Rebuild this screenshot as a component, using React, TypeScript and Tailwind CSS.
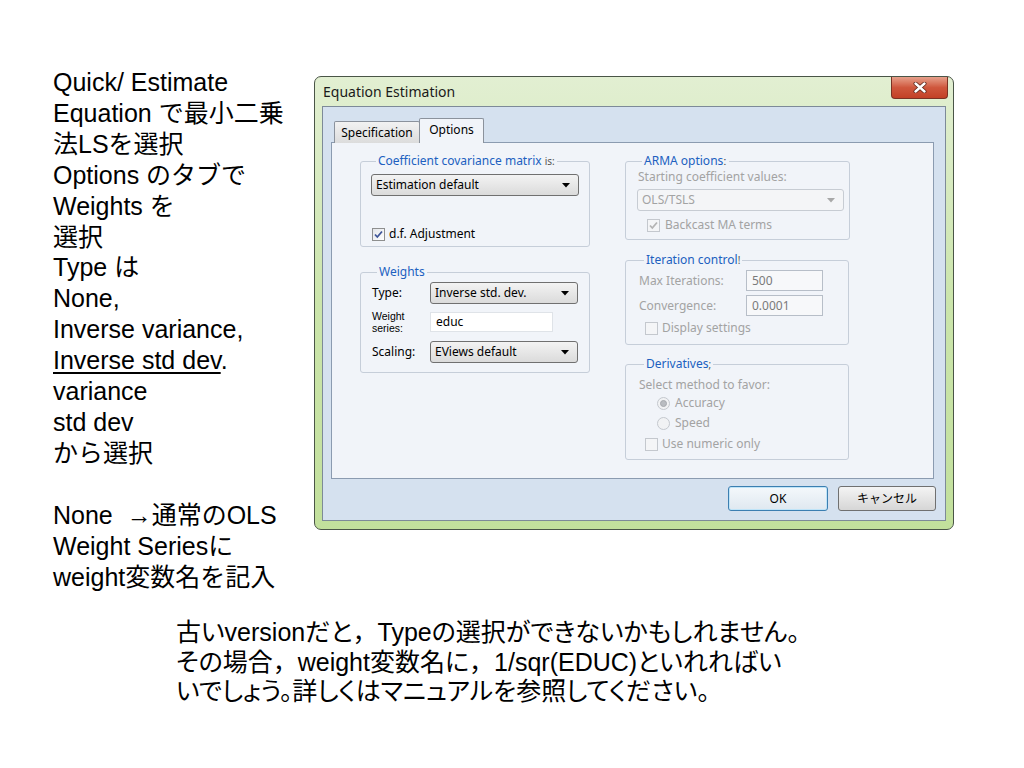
import React from "react";

const DLG = "font-['Noto_Sans','Noto_Sans_CJK_JP',sans-serif]";

function Arrow({ disabled }: { disabled?: boolean }) {
  return (
    <svg width="8" height="5" viewBox="0 0 8 5" className="shrink-0">
      <polygon points="0,0 8,0 4,4.5" fill={disabled ? "#a8a8a8" : "#000"} />
    </svg>
  );
}

function Select({ value, className = "", disabled }: { value: string; className?: string; disabled?: boolean }) {
  return (
    <div
      className={`flex items-center justify-between h-[22px] rounded-[3px] border pl-[4px] pr-[8px] leading-[16px] ${
        disabled
          ? "border-[#c7ccd3] bg-[#f4f5f7] text-[#a3a3a3]"
          : "border-[#707070] bg-linear-to-b from-[#f3f3f3] to-[#dbdbdb] text-black"
      } ${className}`}
    >
      <span>{value}</span>
      <Arrow disabled={disabled} />
    </div>
  );
}

function Check({ checked, disabled }: { checked?: boolean; disabled?: boolean }) {
  return (
    <div
      className={`w-[13px] h-[13px] border shrink-0 flex items-center justify-center ${
        disabled ? "border-[#c4c8ce] bg-[#f4f5f7]" : "border-[#8e8f8f] bg-linear-to-br from-[#e4e6ea] to-[#ffffff]"
      }`}
    >
      {checked && (
        <svg width="11" height="11" viewBox="0 0 11 11">
          <path
            d="M2 5.5 L4.3 8 L9 2.5"
            fill="none"
            stroke={disabled ? "#b4b4b4" : "#3f5699"}
            strokeWidth="1.8"
          />
        </svg>
      )}
    </div>
  );
}

function Radio({ checked }: { checked?: boolean }) {
  return (
    <div className="w-[13px] h-[13px] rounded-full border border-[#c4c8ce] bg-[#f1f2f4] flex items-center justify-center shrink-0">
      {checked && <div className="w-[7px] h-[7px] rounded-full bg-[#b9bcc1] border border-[#a6a9ae]" />}
    </div>
  );
}

function Legend({ children, tail }: { children: React.ReactNode; tail?: string }) {
  return (
    <legend className="ml-[5px] px-[2px] leading-[16px] text-[#2060c0]">
      {children}
      {tail && <span className="text-[10px] text-[#555]">{tail}</span>}
    </legend>
  );
}

function Window() {
  return (
    <div className={`w-[640px] h-[454px] rounded-[7px] border border-[#4a5547] bg-linear-to-b from-[#e2efd2] via-[#cbe5ab] to-[#c2e09c] flex flex-col px-[7px] pb-[8px] ${DLG}`}>
      <div className="h-[29px] flex items-start justify-between shrink-0">
        <div className="pt-[6px] pl-[1px] text-[14px] leading-[18px] text-[#1a1a1a]">Equation Estimation</div>
        <div className="w-[57px] h-[22px] -mr-[2px] rounded-b-[4px] border border-t-0 border-[#7b3224] bg-linear-to-b from-[#e6a08b] via-[#cf573d] to-[#c34026] flex items-center justify-center">
          <svg width="14" height="11" viewBox="0 0 14 11">
            <path d="M2.5 1.5 L11.5 9.5 M11.5 1.5 L2.5 9.5" stroke="#5a2418" strokeWidth="4" strokeLinecap="round" />
            <path d="M2.5 1.5 L11.5 9.5 M11.5 1.5 L2.5 9.5" stroke="#ffffff" strokeWidth="2.4" strokeLinecap="round" />
          </svg>
        </div>
      </div>
      <div className="flex-1 border border-[#7d8a98] bg-[#d5e1ef] flex flex-col pl-[8px] pr-[11px] pt-[11px] text-[12px] text-black">
        {/* tabs */}
        <div className="flex items-end h-[25px] ml-[3px] -mb-px relative z-10">
          <div className="h-[22px] px-[4px] border border-b-0 border-[#8b929c] bg-linear-to-b from-[#f2f2f2] to-[#dcdcdc] rounded-t-[2px] leading-[21px] w-[86px] flex justify-center">
            Specification
          </div>
          <div className="h-[25px] border border-b-0 border-[#8b929c] bg-[#f1f4f9] rounded-t-[2px] leading-[22px] w-[65px] flex justify-center -ml-px">
            Options
          </div>
        </div>
        {/* panel */}
        <div className="h-[337px] border border-[#8b9bb0] bg-[#f1f4f9] flex pl-[28px] pt-[10px]">
          {/* left column */}
          <div className="w-[230px] flex flex-col">
            <fieldset className="border border-[#c6ced9] rounded-[3px] px-[10px] pb-[4px]">
              <Legend tail="is:">Coefficient covariance matrix </Legend>
              <Select className="mt-[5px] w-[208px]" value="Estimation default" />
              <div className="mt-[30px] h-[16px] flex items-center gap-[4px] ml-[1px]">
                <Check checked />
                <span>d.f. Adjustment</span>
              </div>
            </fieldset>
            <fieldset className="mt-[17px] border border-[#c6ced9] rounded-[3px] px-[11px] pb-[9px]">
              <Legend>Weights</Legend>
              <div className="mt-[2px] h-[22px] flex items-center">
                <span className="w-[58px]">Type:</span>
                <Select className="w-[148px]" value="Inverse std. dev." />
              </div>
              <div className="mt-[8px] h-[20px] flex items-center">
                <div className="w-[58px] flex flex-col text-[10.5px] leading-[12px] font-['Liberation_Sans',sans-serif]">
                  <span>Weight</span>
                  <span>series:</span>
                </div>
                <div className="w-[123px] h-[20px] border border-[#dfe3e8] bg-white pl-[5px] leading-[18px]">educ</div>
              </div>
              <div className="mt-[9px] h-[22px] flex items-center">
                <span className="w-[58px]">Scaling:</span>
                <Select className="w-[148px]" value="EViews default" />
              </div>
            </fieldset>
          </div>
          {/* right column */}
          <div className="w-[224px] ml-[35px] flex flex-col text-[#a3a3a3]">
            <fieldset className="border border-[#c6ced9] rounded-[3px] pl-[11px] pr-[5px] pb-[6px]">
              <Legend tail="ː">ARMA options</Legend>
              <div className="leading-[16px] ml-[1px]">Starting coefficient values:</div>
              <Select disabled className="mt-[4px] w-[207px]" value="OLS/TSLS" />
              <div className="mt-[6px] h-[16px] flex items-center gap-[5px] ml-[10px]">
                <Check checked disabled />
                <span>Backcast MA terms</span>
              </div>
            </fieldset>
            <fieldset className="mt-[12px] border border-[#c6ced9] rounded-[3px] pl-[13px] pb-[8px]">
              <Legend tail="!">Iteration control</Legend>
              <div className="mt-[2px] h-[21px] flex items-center">
                <span className="w-[107px]">Max Iterations:</span>
                <div className="w-[77px] h-[21px] border border-[#b7bec8] bg-[#f7f8fa] pl-[5px] leading-[19px] text-[#7a7a7a]">500</div>
              </div>
              <div className="mt-[4px] h-[21px] flex items-center">
                <span className="w-[107px]">Convergence:</span>
                <div className="w-[77px] h-[21px] border border-[#b7bec8] bg-[#f7f8fa] pl-[5px] leading-[19px] text-[#7a7a7a]">0.0001</div>
              </div>
              <div className="mt-[4px] h-[16px] flex items-center gap-[4px] ml-[6px]">
                <Check disabled />
                <span>Display settings</span>
              </div>
            </fieldset>
            <fieldset className="mt-[11px] border border-[#c6ced9] rounded-[3px] pl-[13px] pb-[7px]">
              <Legend tail=";">Derivatives</Legend>
              <div className="mt-[5px] leading-[16px]">Select method to favor:</div>
              <div className="mt-[2px] h-[16px] flex items-center gap-[5px] ml-[18px]">
                <Radio checked />
                <span>Accuracy</span>
              </div>
              <div className="mt-[4px] h-[16px] flex items-center gap-[5px] ml-[18px]">
                <Radio />
                <span>Speed</span>
              </div>
              <div className="mt-[5px] h-[16px] flex items-center gap-[4px] ml-[6px]">
                <Check disabled />
                <span>Use numeric only</span>
              </div>
            </fieldset>
          </div>
        </div>
        {/* buttons */}
        <div className="mt-[7px] flex justify-end gap-[10px] -mr-[2px]">
          <div className="w-[100px] h-[25px] rounded-[3px] border border-[#3c7fb1] bg-linear-to-b from-[#f4f8fb] to-[#dfe8f0] shadow-[inset_0_0_0_1px_#bfe4f8] flex items-center justify-center">
            OK
          </div>
          <div className="w-[98px] h-[25px] rounded-[3px] border border-[#707070] bg-linear-to-b from-[#f4f4f4] to-[#d6d6d6] flex items-center justify-center">
            キャンセル
          </div>
        </div>
      </div>
    </div>
  );
}

function Comma() {
  return <span className="[font-feature-settings:normal]">，</span>;
}

export default function App() {
  const lines: React.ReactNode[] = [
    "Quick/ Estimate",
    "Equation で最小二乗",
    "法LSを選択",
    "Options のタブで",
    "Weights を",
    "選択",
    "Type は",
    "None,",
    "Inverse variance,",
    <>
      <span className="underline underline-offset-[3px] decoration-[1.5px]">Inverse std dev</span>.
    </>,
    "variance",
    "std dev",
    "から選択",
    "\u00a0",
    "None  →通常のOLS",
    "Weight Seriesに",
    "weight変数名を記入",
  ];
  return (
    <div className="w-[1024px] h-[768px] bg-white overflow-hidden text-black">
      <div className="flex">
        <div className="w-[314px] shrink-0 pl-[53px] pt-[67px] text-[25px] leading-[30.9px] font-['Liberation_Sans','Noto_Sans_CJK_JP',sans-serif]">
          {lines.map((l, i) => (
            <div key={i} className="whitespace-pre">
              {l}
            </div>
          ))}
        </div>
        <div className="pt-[76px]">
          <Window />
        </div>
      </div>
      <div className="mt-[26px] pl-[176px] text-[25px] leading-[29.5px] font-['Liberation_Sans','Noto_Sans_CJK_JP',sans-serif] [font-feature-settings:'palt'] whitespace-nowrap">
        <div>
          古いversionだと<Comma />Typeの選択ができないかもしれません。
        </div>
        <div>
          その場合<Comma />weight変数名に<Comma />1/sqr(EDUC)といれればい
        </div>
        <div>いでしょう。詳しくはマニュアルを参照してください。</div>
      </div>
    </div>
  );
}
